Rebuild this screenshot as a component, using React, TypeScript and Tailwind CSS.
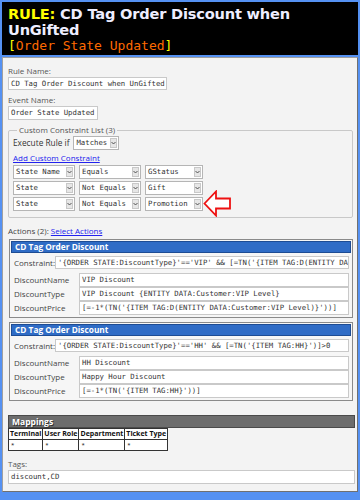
import React from "react";

const mono = "font-['DejaVu_Sans_Mono',monospace]";
const sans = "font-['Open_Sans',sans-serif]";

function Select({ value, w }: { value: string; w: string }) {
  return (
    <div className={`${w} h-[14px] flex border border-[#b5b5b5] bg-white`}>
      <div className={`flex-1 ${mono} text-[7.3px] leading-[12px] pl-[2px] text-[#333] overflow-hidden whitespace-nowrap`}>
        {value}
      </div>
      <div className="w-[7px] m-[1px] bg-[#e6e6e6] border border-[#c8c8c8] flex items-center justify-center">
        <svg width="5" height="4" viewBox="0 0 5 4">
          <path d="M0.5 1 L2.5 3 L4.5 1" stroke="#444" strokeWidth="0.9" fill="none" />
        </svg>
      </div>
    </div>
  );
}

function Field({ value, className }: { value: string; className: string }) {
  return (
    <div
      className={`${className} min-w-0 bg-white border border-[#c9c9c9] ${mono} text-[7.3px] leading-[10px] text-[#333] pl-[2px] overflow-hidden whitespace-nowrap flex items-center`}
    >
      {value}
    </div>
  );
}

type Action = {
  constraint: string;
  name: string;
  type: string;
  price: string;
};

function ActionBox({ a }: { a: Action }) {
  return (
    <div className="border border-[#8a8a8a] bg-[#f6f6f6] p-[1px]">
      <div className={`h-[12px] bg-[#2f6cc6] border border-[#1d4c94] ${sans} font-bold text-[8.3px] leading-[10px] text-white pl-[3px]`}>
        CD Tag Order Discount
      </div>
      <div className="px-[2px] pt-[3px] pb-[1px]">
        <div className="flex items-center h-[13px]">
          <span className={`${sans} text-[8px] leading-[10px] text-[#444] w-[42px] pl-[1px]`}>Constraint:</span>
          <Field value={a.constraint} className="flex-1 h-[13px]" />
        </div>
        <div className="flex flex-col mt-[4px]">
          {[
            ["DiscountName", a.name],
            ["DiscountType", a.type],
            ["DiscountPrice", a.price],
          ].map(([l, v]) => (
            <div key={l} className="flex items-center h-[14px]">
              <span className={`${sans} text-[8px] leading-[10px] text-[#444] w-[66px] pl-[1px]`}>{l}</span>
              <Field value={v} className="flex-1 h-[14px]" />
            </div>
          ))}
        </div>
      </div>
    </div>
  );
}

const actions: Action[] = [
  {
    constraint: "'{ORDER STATE:DiscountType}'=='VIP' && [=TN('{ITEM TAG:D(ENTITY DATA:Customer:VIP Level)}')]>0",
    name: "VIP Discount",
    type: "VIP Discount {ENTITY DATA:Customer:VIP Level}",
    price: "[=-1*(TN('{ITEM TAG:D(ENTITY DATA:Customer:VIP Level)}'))]",
  },
  {
    constraint: "'{ORDER STATE:DiscountType}'=='HH' && [=TN('{ITEM TAG:HH}')]>0",
    name: "HH Discount",
    type: "Happy Hour Discount",
    price: "[=-1*(TN('{ITEM TAG:HH}'))]",
  },
];

const constraints = [
  ["State Name", "Equals", "GStatus"],
  ["State", "Not Equals", "Gift"],
  ["State", "Not Equals", "Promotion"],
];

export default function App() {
  return (
    <div className="w-[360px] h-[500px] bg-[#5591f2] px-[2px] pt-[2px] pb-[8px] flex flex-col gap-[2px] overflow-hidden">
      {/* header */}
      <div className="h-[53px] bg-black pl-[6px] pt-[4px] shrink-0">
        <div className="font-['DejaVu_Sans',sans-serif] font-bold text-[14.6px] leading-[16px] text-[#eeeeff] tracking-[-0.2px]">
          <span className="text-[#ffff00]">RULE:</span> CD Tag Order Discount when UnGifted
        </div>
        <div className={`${mono} text-[13px] leading-[15px]`}>
          <span className="text-[#ffff00]">[</span>
          <span className="text-[#ff6a00]">Order State Updated</span>
          <span className="text-[#ffff00]">]</span>
        </div>
      </div>

      {/* body */}
      <div className="flex-1 bg-[#f3f3f3] border border-[#a0a0a0] border-r-[#707070] border-b-[#707070] pl-[5px] pr-[4px] pt-[8px]">
        <div className={`${sans} text-[8px] leading-[10px] text-[#555]`}>Rule Name:</div>
        <Field value="CD Tag Order Discount when UnGifted" className="w-[159px] h-[13px] mt-[1px]" />
        <div className={`${sans} text-[8px] leading-[10px] text-[#555] mt-[5px]`}>Event Name:</div>
        <Field value="Order State Updated" className="w-[90px] h-[14px] mt-[1px]" />

        <fieldset className="mt-[6px] border border-[#c8c8c8] rounded-[2px] pl-[4px] pr-[4px] pb-[6px] w-[345px]">
          <legend className={`${sans} text-[8px] leading-[8px] text-[#555] px-[2px] ml-[4px]`}>
            Custom Constraint List (3)
          </legend>
          <div className="flex items-center gap-[4px] mt-[2px]">
            <span className={`${sans} text-[8.3px] leading-[10px] text-[#333]`}>Execute Rule if</span>
            <Select value="Matches" w="w-[46px]" />
          </div>
          <div className={`${sans} text-[8px] leading-[10px] text-[#2222ee] underline mt-[3px]`}>
            Add Custom Constraint
          </div>
          <div className="flex flex-col gap-[2px] mt-[2px]">
            {constraints.map((c, i) => (
              <div key={i} className="flex gap-[4px] relative">
                <Select value={c[0]} w="w-[62px]" />
                <Select value={c[1]} w="w-[62px]" />
                <Select value={c[2]} w="w-[58px]" />
                {i === 2 && (
                  <svg
                    className="absolute left-[190px] top-[-7px]"
                    width="30"
                    height="27"
                    viewBox="0 0 30 27"
                  >
                    <path
                      d="M1.5 13.5 L13 1.5 L13 8.5 L27 8.5 L27 18.5 L13 18.5 L13 25.5 Z"
                      fill="white"
                      stroke="#ee1111"
                      strokeWidth="1.8"
                      strokeLinejoin="miter"
                    />
                  </svg>
                )}
              </div>
            ))}
          </div>
        </fieldset>

        <div className={`${sans} text-[8px] leading-[10px] text-[#444] mt-[8px]`}>
          Actions (2): <span className="text-[#2222ee] underline">Select Actions</span>
        </div>
        <div className="flex flex-col gap-[4px] mt-[3px] w-[344px] ml-[1px]">
          {actions.map((a, i) => (
            <ActionBox key={i} a={a} />
          ))}
        </div>

        {/* mappings */}
        <div className="mt-[14px] w-[347px]">
          <div
            className={`h-[13px] bg-[#6d6d6d] border border-[#4a4a4a] ${sans} font-bold text-[8.5px] leading-[11px] text-white pl-[3px] [text-shadow:1px_1px_0_#333]`}
          >
            Mappings
          </div>
          <table className={`border-collapse ${sans} text-[7px] leading-[8px] text-[#111]`}>
            <thead>
              <tr>
                {["Terminal", "User Role", "Department", "Ticket Type"].map((h) => (
                  <th key={h} className="border border-[#333] bg-white font-bold px-[1px] py-[1px] text-left">
                    {h}
                  </th>
                ))}
              </tr>
            </thead>
            <tbody>
              <tr>
                {[0, 1, 2, 3].map((i) => (
                  <td key={i} className="border border-[#333] bg-white px-[2px] py-[1px] text-[6px]">
                    *
                  </td>
                ))}
              </tr>
            </tbody>
          </table>
        </div>

        <div className={`${sans} text-[8px] leading-[10px] text-[#555] mt-[8px]`}>Tags:</div>
        <Field value="discount,CD" className="w-[347px] h-[14px] mt-[1px]" />
      </div>
    </div>
  );
}
